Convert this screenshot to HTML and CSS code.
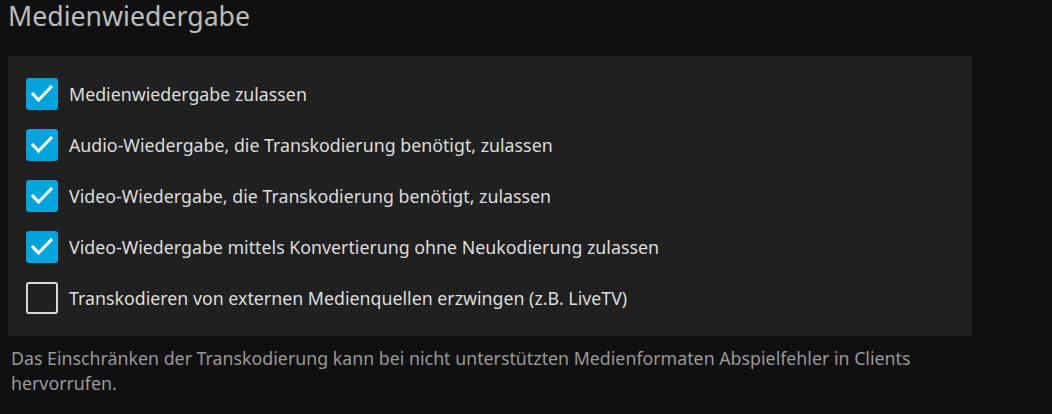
FILE: index.html
```html
<!DOCTYPE html>
<html lang="de">
<head>
    <meta charset="UTF-8">
    <meta name="viewport" content="width=device-width, initial-scale=1.0">
    <title>Medienwiedergabe</title>
    <link rel="stylesheet" href="styles.css">
</head>
<body>
    <section class="settings">
        <h2 class="section-title">Medienwiedergabe</h2>

        <div class="checkbox-list">
            <label class="checkbox-row">
                <input type="checkbox" checked>
                <span class="checkbox-box">
                    <svg viewBox="0 0 32 32"><polyline points="7,16 12.5,22 25,9"/></svg>
                </span>
                <span class="checkbox-label">Medienwiedergabe zulassen</span>
            </label>
            <label class="checkbox-row">
                <input type="checkbox" checked>
                <span class="checkbox-box">
                    <svg viewBox="0 0 32 32"><polyline points="7,16 12.5,22 25,9"/></svg>
                </span>
                <span class="checkbox-label">Audio-Wiedergabe, die Transkodierung benötigt, zulassen</span>
            </label>
            <label class="checkbox-row">
                <input type="checkbox" checked>
                <span class="checkbox-box">
                    <svg viewBox="0 0 32 32"><polyline points="7,16 12.5,22 25,9"/></svg>
                </span>
                <span class="checkbox-label">Video-Wiedergabe, die Transkodierung benötigt, zulassen</span>
            </label>
            <label class="checkbox-row">
                <input type="checkbox" checked>
                <span class="checkbox-box">
                    <svg viewBox="0 0 32 32"><polyline points="7,16 12.5,22 25,9"/></svg>
                </span>
                <span class="checkbox-label">Video-Wiedergabe mittels Konvertierung ohne Neukodierung zulassen</span>
            </label>
            <label class="checkbox-row">
                <input type="checkbox">
                <span class="checkbox-box">
                    <svg viewBox="0 0 32 32"><polyline points="7,16 12.5,22 25,9"/></svg>
                </span>
                <span class="checkbox-label">Transkodieren von externen Medienquellen erzwingen (z.B. LiveTV)</span>
            </label>
        </div>

        <div class="field-description">Das Einschränken der Transkodierung kann bei nicht unterstützten Medienformaten Abspielfehler in Clients hervorrufen.</div>
    </section>
</body>
</html>
```

FILE: styles.css
```css
body {
    margin: 0;
    padding: 0 8px;
    background-color: #101010;
    color: #dddddd;
    font-family: "Noto Sans", sans-serif;
    font-size: 17.8px;
}

.settings {
    width: 964px;
}

.section-title {
    margin: 0;
    font-size: 26.7px;
    font-weight: 400;
    line-height: 32px;
    color: #bcbcbc;
    padding-bottom: 24px;
}

.checkbox-list {
    display: flex;
    flex-direction: column;
    gap: 19px;
    padding: 22px 18px;
    background-color: #202020;
}

.checkbox-row {
    display: flex;
    align-items: center;
    height: 32px;
    cursor: pointer;
}

.checkbox-row input {
    display: none;
}

.checkbox-box {
    box-sizing: border-box;
    width: 32px;
    height: 32px;
    border: 2px solid #d8d8d8;
    border-radius: 3px;
    flex-shrink: 0;
}

.checkbox-box svg {
    display: none;
    width: 32px;
    height: 32px;
    margin: -2px;
}

.checkbox-box polyline {
    fill: none;
    stroke: #ffffff;
    stroke-width: 3;
    stroke-linecap: square;
}

.checkbox-row input:checked + .checkbox-box {
    background-color: #00a4dc;
    border-color: #00a4dc;
}

.checkbox-row input:checked + .checkbox-box svg {
    display: block;
}

.checkbox-label {
    margin-left: 11px;
    color: #dddddd;
}

.field-description {
    margin-top: 10px;
    padding-left: 3px;
    line-height: 25px;
    color: #999999;
}
```
